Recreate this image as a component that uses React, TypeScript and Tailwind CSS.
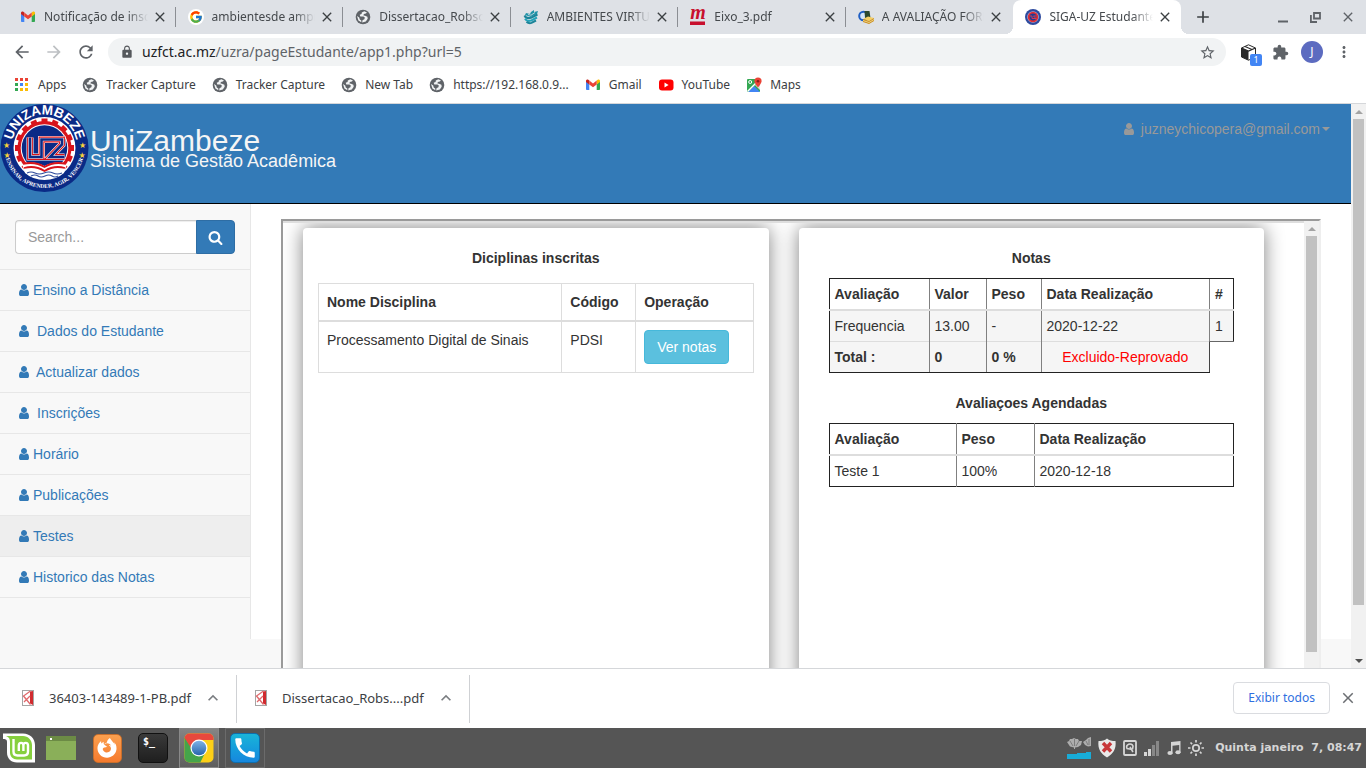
import type { ReactNode } from "react";
import {
  MdArrowBack,
  MdArrowForward,
  MdCall,
  MdClose,
  MdExtension,
  MdLock,
  MdMoreVert,
  MdRefresh,
  MdStarBorder,
  MdAdd,
  MdKeyboardArrowUp,
} from "react-icons/md";
import { FcGoogle } from "react-icons/fc";
import { FaFirefoxBrowser } from "react-icons/fa";

function GmailIcon() {
  return (
    <svg viewBox="0 0 16 16" className="size-4">
      <path d="M1 4v8.2c0 .5.4.8.8.8H4.300V7z" fill="#4285f4" />
      <path d="M15 4v8.200c0 .5-.4.8-.8.8h-2.500V7z" fill="#34a853" />
      <path d="M11.700 3.600V7.500L15 5V4c0-1.300-1.400-1.900-2.300-1.200z" fill="#fbbc04" />
      <path d="M4.300 3.600V7.500L1 5V4c0-1.300 1.400-1.900 2.300-1.200z" fill="#c5221f" />
      <path d="M4.300 3.600L8 6.400l3.700-2.800v3.900L8 10.300 4.300 7.500z" fill="#ea4335" />
    </svg>
  );
}

function GoogleIcon() {
  return (
    <span className="flex size-4 items-center justify-center rounded-full bg-white">
      <FcGoogle className="size-[14px]" />
    </span>
  );
}

function GlobeIcon() {
  return (
    <svg viewBox="0 0 16 16" className="size-4">
      <circle cx="8" cy="8" r="7.300" fill="#5f6368" />
      <path
        d="M9.300 2.300L6.800 3.500 6.600 5 4.700 5.800 5.300 7.400h3.200l1.300 1.200-.4 1.700-1.900.9-.3 2.200 3.600-1 1.900-2.700-.3-1.900-2.300-1-1.600-.3.300-1.500 2-.5 1.200-1zM2 7l2.200 1.500.6 2.100 1.500.9v1.700L3.400 11.500z"
        fill="#f1f3f4"
      />
    </svg>
  );
}

function BooksIcon() {
  return (
    <svg viewBox="0 0 16 16" className="size-4" fill="none" strokeWidth="2">
      <path d="M8 3l3-2v2l4-1-1 3-6 3-6-2 1-2 4 1z" fill="#1f93a8" />
      <path d="M1.500 6.500c1 2.200 3.500 3 6.500 2.300L14.500 5.500" stroke="#1b8499" />
      <path d="M2 9.700c1 1.800 3.500 2.500 6 1.900l6-3.100" stroke="#22a3b9" />
      <path d="M3.500 12.700c1.500 1.400 3.300 1.700 5 1.200l4.500-2.400" stroke="#1b8499" />
      <path d="M5 5.500l3 .7 4-2.700" stroke="#dee1e6" strokeWidth=".8" />
    </svg>
  );
}

function MendeleyIcon() {
  return (
    <svg viewBox="0 0 16 16" className="size-4">
      <text x="8" y="10" textAnchor="middle" fill="#c8102e" fontFamily="Liberation Serif, serif" fontStyle="italic" fontWeight="700" fontSize="20">
        m
      </text>
      <rect x="0" y="12.500" width="15" height="3.500" fill="#c8102e" />
    </svg>
  );
}

function LibraryIcon() {
  return (
    <svg viewBox="0 0 16 16" className="size-4">
      <circle cx="5.500" cy="7" r="4.300" fill="#d5e6fb" stroke="#1f5fc4" strokeWidth="2" />
      <path d="M6.500 2h5l1 7H7z" fill="#2d4a2f" />
      <path d="M5 10l5-2.500 6 1.500-5 3z" fill="#f6cf63" />
      <path d="M5 10v3l6 2v-3zM11 12v3l5-3V9z" fill="#c98d1d" />
      <path d="M5 11.500l6 2 5-3" fill="none" stroke="#fff0b5" strokeWidth=".7" />
    </svg>
  );
}

function CrestIcon() {
  return (
    <svg viewBox="0 0 16 16" className="size-4">
      <circle cx="8" cy="8" r="8" fill="#2d4a9e" />
      <circle cx="8" cy="8" r="5.800" fill="#a9b4dc" />
      <circle cx="8" cy="8" r="4.300" fill="#1f3c94" stroke="#e02c33" strokeWidth="1.800" />
      <path d="M5 7h2v2.500h4L8.500 7H11" stroke="#d63a50" fill="none" />
    </svg>
  );
}

const TEETH = Array.from({ length: 16 }, (_, i) => i * 22.5);

function Crest() {
  return (
    <svg viewBox="0 0 90 88" className="h-[88px] w-[90px] shrink-0" role="img" aria-label="Universidade Zambeze">
      <defs>
        <path id="crest-top" d="M14.500 55.500a32.500 32.500 0 1 1 60 0" />
        <path id="crest-bottom" d="M4.500 44a40 40 0 0 0 80 0" />
      </defs>
      <circle cx="44.500" cy="44" r="44" fill="#0a2a86" />
      <circle cx="44.500" cy="44" r="31" fill="#fff" />
      {TEETH.map((angle) => (
        <rect key={angle} x="41.500" y="14.500" width="6" height="6" fill="#d8141c" transform={`rotate(${angle} 44.500 44)`} />
      ))}
      <circle cx="44.500" cy="44" r="27" fill="#d8141c" />
      <circle cx="44.500" cy="44" r="23.800" fill="#fff" />
      <circle cx="44.500" cy="44" r="22.800" fill="#0a2a86" />
      <g fill="none" strokeLinejoin="miter">
        <path d="M30 33.500V53h11.500V35.500H62v5L50 53h14.500" stroke="#fff" strokeWidth="7" />
        <path d="M30 33.500V53h11.500V35.500H62v5L50 53h14.500" stroke="#d8141c" strokeWidth="5.800" />
        <path d="M30 33.500V53h11.500V35.500H62v5L50 53h14.500" stroke="#fff" strokeWidth="3.600" />
        <path d="M30 33.500V53h11.500V35.500H62v5L50 53h14.500" stroke="#0a2a86" strokeWidth="2.600" />
      </g>
      <path d="M22 60q12-4 22.500 2 10.500-6 22.500-2l-3 9Q56 76 44.500 76T25 69z" fill="#fff" />
      <path d="M23 60q12-3 21.500 3Q54 57 66 60M24 64q11-3 20.500 3Q54 61 65 64" fill="none" stroke="#d8141c" strokeWidth="1.800" />
      <path d="M27 69q4-2 8 0t9 0 9 0 9 0M31 72q4-2 7 0t7 0 7 0 6 0" fill="none" stroke="#2f4b9c" strokeWidth="1.100" />
      <text fill="#fff" fontFamily="Liberation Sans, sans-serif" fontWeight="700" fontSize="13.500">
        <textPath href="#crest-top" startOffset="50%" textAnchor="middle">UNIZAMBEZE</textPath>
      </text>
      <text fill="#fff" fontFamily="Liberation Serif, serif" fontWeight="700" fontSize="5.700">
        <textPath href="#crest-bottom" startOffset="50%" textAnchor="middle">ENSINAR, APRENDER, AGIR, VENCER</textPath>
      </text>
      <g fill="#f6d13a" fontFamily="DejaVu Sans, sans-serif" fontSize="8" textAnchor="middle">
        <text x="6.500" y="44">★</text>
        <text x="7" y="54">★</text>
        <text x="82.500" y="44">★</text>
        <text x="82" y="54">★</text>
      </g>
    </svg>
  );
}

function UserIcon() {
  return (
    <svg viewBox="0 0 1792 1792" fill="currentColor" className="size-[14px] shrink-0">
      <path d="M1536 1399q0 109-62.500 187t-150.500 78h-854q-88 0-150.500-78t-62.500-187q0-85 8.500-160.500t31.500-152 58.500-131 94-89 134.500-34.500q131 128 313 128t313-128q76 0 134.500 34.500t94 89 58.500 131 31.500 152 8.500 160.500zm-256-887q0 159-112.500 271.500t-271.500 112.500-271.500-112.500-112.500-271.500 112.500-271.500 271.500-112.500 271.500 112.500 112.500 271.500z" />
    </svg>
  );
}

function SearchIcon() {
  return (
    <svg viewBox="0 0 1792 1792" fill="currentColor" className="size-[15px]">
      <path d="M1216 832q0-185-131.500-316.500t-316.500-131.500-316.500 131.500-131.500 316.500 131.500 316.500 316.500 131.500 316.500-131.500 131.500-316.500zm512 832q0 52-38 90t-90 38q-54 0-90-38l-343-342q-179 124-399 124-143 0-273.500-55.500t-225-150-150-225-55.500-273.500 55.500-273.500 150-225 225-150 273.500-55.500 273.500 55.500 225 150 150 225 55.500 273.500q0 220-124 399l343 343q37 37 37 90z" />
    </svg>
  );
}

type Tab = { title: string; icon: ReactNode; active?: boolean; divider?: boolean };

const TABS: Tab[] = [
  { title: "Notificação de inscrição", icon: <GmailIcon />, divider: true },
  { title: "ambientesde amprendizagem", icon: <GoogleIcon />, divider: true },
  { title: "Dissertacao_Robson.pdf", icon: <GlobeIcon />, divider: true },
  { title: "AMBIENTES VIRTUAIS", icon: <BooksIcon />, divider: true },
  { title: "Eixo_3.pdf", icon: <MendeleyIcon />, divider: true },
  { title: "A AVALIAÇÃO FORMATIVA", icon: <LibraryIcon /> },
  { title: "SIGA-UZ Estudantes", icon: <CrestIcon />, active: true },
];

function TabStrip() {
  return (
    <div className="flex h-[34px] shrink-0 items-stretch bg-[#dee1e6] pl-2">
      <div className="grid min-w-0 max-w-[1173px] flex-1 grid-cols-7">
        {TABS.map((tab) => (
          <div
            key={tab.title}
            className={
              tab.active
                ? "relative flex min-w-0 items-center rounded-t-lg bg-white pl-3 pr-2 before:absolute before:-left-2 before:bottom-0 before:size-2 before:bg-[radial-gradient(circle_at_0_0,transparent_8px,white_8px)] after:absolute after:-right-2 after:bottom-0 after:size-2 after:bg-[radial-gradient(circle_at_100%_0,transparent_8px,white_8px)]"
                : "flex min-w-0 items-center pl-3"
            }
          >
            <span className="flex w-4 shrink-0 justify-center">{tab.icon}</span>
            <span className="ml-2 min-w-0 flex-1 overflow-hidden whitespace-nowrap text-[#45494d] [mask-image:linear-gradient(to_right,black_80%,transparent)]">
              {tab.title}
            </span>
            <button aria-label={`Fechar ${tab.title}`} className="ml-1 flex size-4 shrink-0 items-center justify-center text-[#3c4043]">
              <MdClose className="size-4" />
            </button>
            {!tab.active && <span className={tab.divider ? "ml-[7px] h-5 w-px bg-[#8b8e93]" : "ml-2 w-px"} />}
          </div>
        ))}
      </div>
      <button aria-label="Nova guia" className="ml-3 flex w-5 items-center justify-center text-[#3c4043]">
        <MdAdd className="size-5" />
      </button>
      <div className="ml-auto flex items-center gap-[18px] pr-[10px] text-[#5f6368]">
        <button aria-label="Minimizar">
          <svg viewBox="0 0 14 14" className="size-[14px]"><path d="M2 11.500h10" stroke="currentColor" strokeWidth="2" /></svg>
        </button>
        <button aria-label="Restaurar">
          <svg viewBox="0 0 14 14" className="size-[14px]" fill="none" stroke="currentColor" strokeWidth="1.800">
            <path d="M6 3h6v5.500H6zM2.900 5v7H9" />
          </svg>
        </button>
        <button aria-label="Fechar janela"><MdClose className="size-4" /></button>
      </div>
    </div>
  );
}

function Toolbar() {
  return (
    <div className="flex h-9 shrink-0 items-center bg-white px-[6px] text-[#5f6368]">
      <button aria-label="Voltar" className="flex w-8 justify-center"><MdArrowBack className="size-5" /></button>
      <button aria-label="Avançar" className="flex w-8 justify-center text-[#bdc0c3]"><MdArrowForward className="size-5" /></button>
      <button aria-label="Recarregar" className="flex w-8 justify-center"><MdRefresh className="size-5" /></button>
      <div className="mx-[6px] flex h-7 flex-1 items-center rounded-full bg-[#f1f3f4] pl-3 pr-[10px]">
        <MdLock className="size-[14px] text-[#55585c]" />
        <span className="ml-2 flex-1 text-[14px] leading-5">
          <span className="text-[#202124]">uzfct.ac.mz</span>/uzra/pageEstudante/app1.php?url=5
        </span>
        <button aria-label="Favoritar"><MdStarBorder className="size-[17px]" /></button>
      </div>
      <button aria-label="Extensão" className="relative flex w-8 justify-center">
        <svg viewBox="0 0 17 17" className="size-[17px]">
          <path d="M8.500 .8L15.500 4v9L8.500 16.200 1.500 13V4z" fill="#fff" stroke="#292929" />
          <path d="M1.500 4l7 3v9.200l-7-3.200z" fill="#292929" />
          <path d="M1.500 4l7 3 7-3M5 2.500l7 3" fill="none" stroke="#292929" strokeWidth="1.200" />
        </svg>
        <span className="absolute -bottom-[5px] right-[2px] flex h-3 w-3 items-center justify-center rounded-[2px] bg-[#4285f4] text-[9px] leading-none text-white">1</span>
      </button>
      <button aria-label="Extensões" className="flex w-8 justify-center"><MdExtension className="size-[17px]" /></button>
      <button aria-label="Perfil" className="flex w-8 justify-center">
        <span className="flex size-[22px] items-center justify-center rounded-full bg-[#5c6bc0] text-white">J</span>
      </button>
      <button aria-label="Menu" className="flex w-8 justify-center"><MdMoreVert className="size-[18px]" /></button>
    </div>
  );
}

function AppsIcon() {
  const colours = ["#ea4335", "#ea4335", "#ea4335", "#34a853", "#4285f4", "#fbbc04", "#34a853", "#fbbc04", "#fbbc04"];
  return (
    <svg viewBox="0 0 16 16" className="size-4">
      {colours.map((c, i) => (
        <rect key={i} x={1 + (i % 3) * 5} y={1 + Math.floor(i / 3) * 5} width="3" height="3" fill={c} />
      ))}
    </svg>
  );
}

function YoutubeIcon() {
  return (
    <svg viewBox="0 0 16 16" className="size-4">
      <rect x="1" y="2.500" width="14.500" height="11" rx="3" fill="#f00" />
      <path d="M6.500 5.600v4.800L10.600 8z" fill="#fff" />
    </svg>
  );
}

function MapsIcon() {
  return (
    <svg viewBox="0 0 16 16" className="size-4">
      <rect x="1" y="2" width="13" height="13" rx="1" fill="#34a853" />
      <path d="M2 15l6-6 6 6z" fill="#4285f4" />
      <path d="M1 14L13 2l1 1L2 15z" fill="#fff" />
      <path d="M9 8l5 5V8z" fill="#dfe1e4" />
      <circle cx="4.200" cy="5" r="1.500" fill="none" stroke="#fff" />
      <path d="M12 .500a3.600 3.600 0 0 0-3.600 3.600C8.400 6.600 12 10.500 12 10.500s3.600-3.900 3.600-6.400A3.600 3.600 0 0 0 12 .500z" fill="#ea4335" />
      <circle cx="12" cy="4.200" r="1.300" fill="#8c1d18" />
    </svg>
  );
}

const BOOKMARKS = [
  { label: "Apps", icon: <AppsIcon /> },
  { label: "Tracker Capture", icon: <GlobeIcon /> },
  { label: "Tracker Capture", icon: <GlobeIcon /> },
  { label: "New Tab", icon: <GlobeIcon /> },
  { label: "https://192.168.0.9...", icon: <GlobeIcon /> },
  { label: "Gmail", icon: <GmailIcon /> },
  { label: "YouTube", icon: <YoutubeIcon /> },
  { label: "Maps", icon: <MapsIcon /> },
];

function BookmarksBar() {
  return (
    <div className="flex h-[34px] shrink-0 items-center gap-4 border-b border-[#d5d7da] bg-white pb-[3px] pl-[14px] text-[#3c4043]">
      {BOOKMARKS.map((b, i) => (
        <a key={i} href="#" className="flex items-center gap-2 whitespace-nowrap">
          <span className="flex w-4 justify-center">{b.icon}</span>
          {b.label}
        </a>
      ))}
    </div>
  );
}

function Triangle({ down, className }: { down?: boolean; className: string }) {
  return (
    <svg viewBox="0 0 8 4" className={className} fill="currentColor">
      <path d={down ? "M0 0h8L4 4z" : "M0 4h8L4 0z"} />
    </svg>
  );
}

const MENU = [
  { label: "Ensino a Distância", gap: "ml-[2px]" },
  { label: "Dados do Estudante", gap: "ml-[6px]" },
  { label: "Actualizar dados", gap: "ml-[5px]" },
  { label: "Inscrições", gap: "ml-[6px]" },
  { label: "Horário", gap: "ml-[2px]" },
  { label: "Publicações", gap: "ml-[2px]" },
  { label: "Testes", gap: "ml-[2px]", active: true },
  { label: "Historico das Notas", gap: "ml-[2px]" },
];

function Sidebar() {
  return (
    <aside className="w-[251px] shrink-0 border-r border-[#e7e7e7] bg-[#f8f8f8]">
      <form className="flex border-b border-[#e7e7e7] px-[15px] pb-[15px] pt-4">
        <input
          aria-label="Search"
          placeholder="Search..."
          className="h-[34px] min-w-0 flex-1 rounded-l border border-r-0 border-[#ccc] bg-white px-3 text-[14px] shadow-[inset_0_1px_1px_rgba(0,0,0,0.075)] placeholder:text-[#999]"
        />
        <button type="button" aria-label="Pesquisar" className="flex h-[34px] w-[39px] items-center justify-center rounded-r border border-[#2e6da4] bg-[#337ab7] text-white">
          <SearchIcon />
        </button>
      </form>
      <nav>
        {MENU.map((item) => (
          <a
            key={item.label}
            href="#"
            className={
              item.active
                ? "flex items-center border-b border-[#e7e7e7] bg-[#eee] px-[17px] py-[10px] text-[#337ab7]"
                : "flex items-center border-b border-[#e7e7e7] px-[17px] py-[10px] text-[#337ab7]"
            }
          >
            <UserIcon />
            <span className={item.gap}>{item.label}</span>
          </a>
        ))}
      </nav>
    </aside>
  );
}

function EnrolledCard() {
  return (
    <section className="min-w-0 rounded bg-white px-[15px] pt-5 shadow-[0_0_20px_#808080]">
      <h2 className="mb-[15px] text-center font-bold">Diciplinas inscritas</h2>
      <table className="w-full table-fixed border-collapse text-left [&_td]:border [&_td]:border-[#ddd] [&_td]:p-2 [&_td]:align-top [&_th]:border [&_th]:border-b-2 [&_th]:border-[#ddd] [&_th]:p-2">
        <thead>
          <tr>
            <th className="w-[56%]">Nome Disciplina</th>
            <th className="w-[17%]">Código</th>
            <th>Operação</th>
          </tr>
        </thead>
        <tbody>
          <tr>
            <td>Processamento Digital de Sinais</td>
            <td>PDSI</td>
            <td>
              <button className="block h-[34px] rounded border border-[#46b8da] bg-[#5bc0de] px-3 text-white">Ver notas</button>
            </td>
          </tr>
        </tbody>
      </table>
    </section>
  );
}

function GradesCard() {
  return (
    <section className="min-w-0 rounded bg-white px-[30px] pt-5 shadow-[0_0_20px_#808080]">
      <h2 className="mb-[10px] text-center font-bold">Notas</h2>
      <table className="mb-5 w-full table-fixed border-collapse text-left [&_td]:border-l [&_td]:border-l-[#808080] [&_td]:p-[5px] [&_th]:border-l [&_th]:border-l-[#808080] [&_th]:p-[5px] [&_tr>:first-child]:border-l-[#222]">
        <thead className="[&_th]:border-b-2 [&_th]:border-t [&_th]:border-b-[#ddd] [&_th]:border-t-[#222]">
          <tr>
            <th className="w-[100px]">Avaliação</th>
            <th className="w-[57px]">Valor</th>
            <th className="w-[55px]">Peso</th>
            <th>Data Realização</th>
            <th className="w-6 border-r border-r-[#222]">#</th>
          </tr>
        </thead>
        <tbody>
          <tr className="bg-[#f5f5f5]">
            <td>Frequencia</td>
            <td>13.00</td>
            <td>-</td>
            <td>2020-12-22</td>
            <td className="border-b border-r border-b-[#666] border-r-[#222]">1</td>
          </tr>
          <tr className="[&>*]:border-b [&>*]:border-t [&>*]:border-b-[#222] [&>*]:border-t-[#ddd] [&>*]:bg-[#f5f5f5]">
            <th>Total :</th>
            <th>0</th>
            <th>0 %</th>
            <td className="border-r border-r-[#444] text-center text-[#f00]">Excluido-Reprovado</td>
          </tr>
        </tbody>
      </table>
      <h2 className="mb-[10px] text-center font-bold">Avaliaçoes Agendadas</h2>
      <table className="w-full table-fixed border-collapse border border-[#222] text-left [&_td]:p-[5px] [&_th]:p-[5px]">
        <thead>
          <tr className="border-b-2 border-[#ddd]">
            <th className="w-[127px]">Avaliação</th>
            <th className="w-[78px] border-l border-l-[#808080]">Peso</th>
            <th className="border-l border-l-[#808080]">Data Realização</th>
          </tr>
        </thead>
        <tbody>
          <tr>
            <td>Teste 1</td>
            <td className="border-l border-l-[#808080]">100%</td>
            <td className="border-l border-l-[#808080]">2020-12-18</td>
          </tr>
        </tbody>
      </table>
    </section>
  );
}

function Frame() {
  return (
    <div className="mt-[15px] flex h-[480px] w-full overflow-hidden border-2 border-b-[#eee] border-l-[#9a9a9a] border-r-[#eee] border-t-[#9a9a9a] bg-white">
      <div className="grid min-w-0 flex-1 grid-cols-2 gap-[30px] overflow-hidden border-t-2 border-[#dedede] pl-5 pr-10 pt-[5px]">
        <EnrolledCard />
        <GradesCard />
      </div>
      <div className="flex w-[15px] shrink-0 flex-col items-center bg-[#f1f1f1] text-[#a3a3a3]">
        <div className="flex h-[15px] items-center"><Triangle className="h-1 w-2" /></div>
        <div className="h-[416px] w-[11px] bg-[#c1c1c1]" />
      </div>
    </div>
  );
}

function Page() {
  return (
    <main className="flex min-h-0 flex-1 bg-[#f8f8f8] font-['Liberation_Sans',Arial,sans-serif] text-[14px] leading-5 text-[#333]">
      <div className="flex min-w-0 flex-1 flex-col overflow-hidden">
        <header className="flex h-[100px] shrink-0 items-start border-b border-black bg-[#337ab7]">
          <Crest />
          <h1 className="pt-[27px] text-[30px] leading-5 text-[#f5f5f5]">
            <span className="block">UniZambeze</span>
            <span className="block text-[18px]">Sistema de Gestão Acadêmica</span>
          </h1>
          <button className="ml-auto mr-[21px] mt-[15px] flex items-center text-[#999]">
            <UserIcon />
            <span className="ml-[5px]">juzneychicopera@gmail.com</span>
            <Triangle down className="ml-[2px] h-1 w-2" />
          </button>
        </header>
        <div className="flex h-[435px] shrink-0">
          <Sidebar />
          <div className="min-w-0 flex-1 bg-white px-[30px]">
            <Frame />
          </div>
        </div>
      </div>
      <div className="flex w-[15px] shrink-0 flex-col items-center bg-[#f1f1f1]">
        <div className="flex h-[15px] items-center text-[#a3a3a3]"><Triangle className="h-1 w-2" /></div>
        <div className="h-[486px] w-[11px] bg-[#c1c1c1]" />
        <div className="mt-auto flex h-[15px] items-center text-[#505050]"><Triangle down className="h-1 w-2" /></div>
      </div>
    </main>
  );
}

function PdfIcon() {
  return (
    <svg viewBox="0 0 12 16" className="h-4 w-3 shrink-0">
      <rect x=".5" y=".5" width="11" height="15" fill="#fff" stroke="#a5a5a5" />
      <path d="M8 1.500l3-.5v14L8 13.500z" fill="#d12a2e" />
      <path d="M8.500 1L1.500 6l7 8.500M8 6L2 12" fill="none" stroke="#e0686b" strokeWidth="1.300" />
    </svg>
  );
}

function DownloadItem({ name }: { name: string }) {
  return (
    <div className="flex h-12 w-[233px] items-center border-r border-[#cfd1d4] pb-[2px] pl-[18px] pr-[11px]">
      <PdfIcon />
      <span className="ml-[15px] flex-1 whitespace-nowrap text-[13px]">{name}</span>
      <button aria-label={`Opções de ${name}`} className="flex w-6 justify-center text-[#7a7d81]">
        <MdKeyboardArrowUp className="size-5" />
      </button>
    </div>
  );
}

function DownloadsBar() {
  return (
    <div className="flex h-[60px] shrink-0 items-center border-t border-[#d5d7da] bg-white pl-1 pr-[10px] text-[#3c4043]">
      <DownloadItem name="36403-143489-1-PB.pdf" />
      <DownloadItem name="Dissertacao_Robs....pdf" />
      <button className="mb-[2px] ml-auto h-8 rounded border border-[#dadce0] px-[14px] text-[#2f6fe0]">Exibir todos</button>
      <button aria-label="Fechar downloads" className="mb-[2px] ml-[10px] flex w-4 justify-center text-[#6b6e72]"><MdClose className="size-[18px] shrink-0" /></button>
    </div>
  );
}

function MintIcon() {
  return (
    <svg viewBox="0 0 32 30" className="h-[30px] w-8">
      <path d="M0 .500h20C27 .500 32 5.500 32 12v17.500H14c-6 0-10-4-10-10V9C4 6 2 6 0 6z" fill="#fff" />
      <path d="M3 3h17c5 0 9 4 9 9v14.500H14c-4 0-7-3-7-7V9c0-3-1-5-4-6z" fill="#86cf3e" />
      <path d="M10.500 6v12.500c0 2.500 1.500 4 4 4h6.500c2.500 0 4-1.500 4-4v-6c0-3.500-4.600-3.500-4.600 0V18v-5.500c0-3.500-4.600-3.500-4.600 0V18" fill="none" stroke="#fff" strokeWidth="2.400" />
    </svg>
  );
}

function ChromeIcon() {
  return (
    <svg viewBox="0 0 30 30" className="size-[30px]">
      <defs>
        <clipPath id="chrome-tile"><rect x=".5" y=".5" width="29" height="29" rx="5" /></clipPath>
        <linearGradient id="chrome-blue" x1="0" y1="0" x2="0" y2="1">
          <stop stopColor="#7eb3e6" /><stop offset="1" stopColor="#2765ad" />
        </linearGradient>
      </defs>
      <g clipPath="url(#chrome-tile)">
        <rect width="30" height="30" fill="#fdd017" />
        <path d="M0 0h30v7H15L9 19 0 5z" fill="#e8483d" />
        <path d="M0 4l9 14 12 2-5 10H0z" fill="#45a54a" />
      </g>
      <circle cx="15" cy="15" r="8.500" fill="#fff" />
      <circle cx="15" cy="15" r="7.300" fill="url(#chrome-blue)" />
    </svg>
  );
}

function Tray() {
  return (
    <div className="ml-auto flex items-center text-[#d5d5d5]">
      <svg viewBox="0 0 24 22" className="h-[22px] w-6">
        <path d="M0 17h10v-1h9v-1h5v7H0z" fill="#18acd8" />
        <path d="M0 5l2-1 1-2 2 0 2-1 2 1 2 0 1 2 3 0-1 4-3 2-3 .5V12H7v-1.500L3 9.500zM16 5l3-2 2-2 3-1v9l-3 .5-3-1.500z" fill="#adadad" />
        <path d="M3 4l3 5M7.500 2v7M12 4l-3 5M19 4l2 4M22 2v6" stroke="#707070" strokeWidth=".8" />
      </svg>
      <svg viewBox="0 0 20 20" className="ml-[6px] size-5">
        <path d="M10 .500c2 2 5 2.500 8.500 2.500 1 8-2.500 13-8.500 16.500C4 16 .500 11 1.500 3 5 3 8 2.500 10 .500z" fill="#e9e9e9" />
        <path d="M6 5l8 8.500M14 5l-8 8.500" stroke="#c8373a" strokeWidth="3.400" />
      </svg>
      <svg viewBox="0 0 14 16" className="ml-[6px] h-4 w-[14px]" fill="none" stroke="currentColor" strokeWidth="1.800">
        <rect x="1" y="1" width="12" height="14" rx="1" />
        <path d="M9.500 9.500L4 8.500a3.200 3.200 0 1 1 6-2.500l-.5 3.500M7 7l3 5" strokeWidth="1.600" />
      </svg>
      <svg viewBox="0 0 16 16" className="ml-[7px] size-4" fill="currentColor">
        <path d="M0 12h3v4H0zM4 9h3v7H4z" />
        <path d="M8 5h3v11H8zM12 1h3v15h-3z" opacity=".4" />
      </svg>
      <svg viewBox="0 0 14 14" className="ml-[7px] size-[14px]" fill="currentColor">
        <path d="M4 1l9.500-1v11.500h-1.300V4L5.500 4.700V13H4z" />
        <ellipse cx="3" cy="12" rx="2.600" ry="2" /><ellipse cx="11" cy="11.200" rx="2.600" ry="2" />
      </svg>
      <svg viewBox="0 0 16 16" className="ml-[7px] size-4" fill="none" stroke="currentColor" strokeWidth="1.700">
        <circle cx="8" cy="8" r="3.200" />
        <path d="M8 0v2.500M8 13.500V16M0 8h2.500M13.500 8H16M2.500 2.500l1.600 1.600M11.900 11.900l1.600 1.600M13.500 2.500l-1.600 1.600M4.100 11.900l-1.600 1.600" />
      </svg>
      <time className="ml-[11px] whitespace-pre font-['DejaVu_Sans',sans-serif] text-[11px] font-bold leading-4">Quinta janeiro  7, 08:47</time>
    </div>
  );
}

function Taskbar() {
  const slot = "flex h-10 w-10 items-center justify-center";
  return (
    <footer className="flex h-10 shrink-0 items-center bg-[#555] pl-[3px] pr-1">
      <button aria-label="Menu Mint" className="mr-[6px] w-8"><MintIcon /></button>
      <div className="flex gap-[6px]">
        <button aria-label="Ficheiros" className={slot}>
          <svg viewBox="0 0 30 24" className="h-6 w-[30px]">
            <rect width="30" height="24" fill="#8aaf59" /><rect width="30" height="5" fill="#6c8b45" />
            <rect x="4" y="2" width="2" height="2" fill="#fff" />
          </svg>
        </button>
        <button aria-label="Firefox" className={slot}>
          <span className="flex size-[29px] items-center justify-center rounded-[5px] border border-[#c96f2c] bg-linear-to-b from-[#fba04f] to-[#f57a2d] text-white">
            <FaFirefoxBrowser className="size-5" />
          </span>
        </button>
        <button aria-label="Terminal" className={slot}>
          <span className="flex size-[30px] items-start rounded-[5px] border border-[#111] bg-linear-to-b from-[#3a3a3a] to-[#1f1f1f] pl-1 pt-[2px] font-['DejaVu_Sans_Mono',monospace] text-[10px] font-bold leading-3 text-white">$_</span>
        </button>
        <button aria-label="Chrome" className="flex h-10 w-10 items-center justify-center border border-[#8a8a8a] bg-linear-to-b from-[#858585] to-[#5e5e5e]"><ChromeIcon /></button>
        <button aria-label="Telefone" className="flex h-10 w-10 items-center justify-center border border-[#6b6b6b]">
          <span className="flex size-[30px] items-center justify-center rounded-[5px] border border-[#0e6fae] bg-linear-to-b from-[#1bb4d8] to-[#1787de] text-white">
            <MdCall className="size-[26px]" />
          </span>
        </button>
      </div>
      <Tray />
    </footer>
  );
}

export default function App() {
  return (
    <div className="flex h-screen flex-col overflow-hidden font-['Noto_Sans',sans-serif] text-[12px] leading-4">
      <TabStrip />
      <Toolbar />
      <BookmarksBar />
      <Page />
      <DownloadsBar />
      <Taskbar />
    </div>
  );
}
